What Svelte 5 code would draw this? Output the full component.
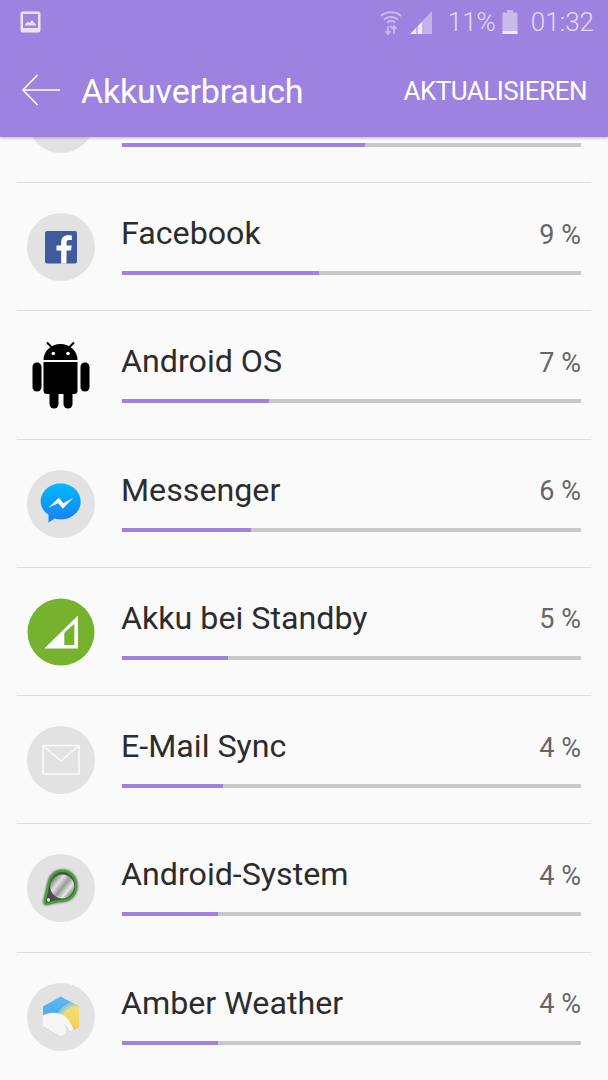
<script lang="ts">
  const apps = [
    { id: 'top', name: '', pct: '', bar: 53, icon: 'blank' },
    { id: 'fb', name: 'Facebook', pct: '9 %', bar: 43, icon: 'facebook' },
    { id: 'os', name: 'Android OS', pct: '7 %', bar: 32, icon: 'android' },
    { id: 'msg', name: 'Messenger', pct: '6 %', bar: 28, icon: 'messenger' },
    { id: 'idle', name: 'Akku bei Standby', pct: '5 %', bar: 23, icon: 'standby' },
    { id: 'mail', name: 'E-Mail Sync', pct: '4 %', bar: 22, icon: 'mail' },
    { id: 'sys', name: 'Android-System', pct: '4 %', bar: 21, icon: 'system' },
    { id: 'amber', name: 'Amber Weather', pct: '4 %', bar: 21, icon: 'amber' },
  ];
</script>

<div class="screen">
  <header class="appbar">
    <div class="status">
      <svg class="pic" width="21" height="22" viewBox="0 0 21 22">
        <rect x="0.5" y="0.5" width="20" height="21" rx="2" fill="#ebe4f9" />
        <rect x="3" y="3" width="15" height="14" fill="#9e82e0" />
        <path d="M4.5 14.5 L7.5 10.5 L9.5 12 L12 9 L16.5 14.5 Z" fill="#ebe4f9" />
      </svg>
      <span class="spacer"></span>
      <svg class="wifi" width="22" height="25" viewBox="0 0 22 25" fill="none" stroke="#c9baee" stroke-width="2">
        <path d="M1 6 C6 1 16 1 21 6" />
        <path d="M4 9.5 C8 6 14 6 18 9.5" />
        <path d="M7 12.5 C9.5 10.5 12.5 10.5 15 12.5" />
        <path d="M11 15 L9 17.5 L13 17.5 Z" fill="#c9baee" stroke="none" />
        <path d="M8 16 V24 M5.5 21 L8 24 L10.5 21 M14 24 V16 M11.5 19 L14 16 L16.5 19" stroke-width="1.8" />
      </svg>
      <svg class="signal" width="22" height="23" viewBox="0 0 22 23">
        <path d="M22 0 V23 H0 Z" fill="#c3b2ec" />
        <path d="M0 23 L6 17 V23 Z M8 15 L12 11 V23 H8 Z" fill="#f0ebfb" />
      </svg>
      <span class="pct">11%</span>
      <svg class="battery" width="16" height="24" viewBox="0 0 16 24">
        <rect x="5" y="0" width="6" height="3" fill="#c9baee" />
        <rect x="0.5" y="2.5" width="15" height="21.5" fill="#c9baee" />
        <rect x="0.5" y="21" width="15" height="3" fill="#f0ebfb" />
      </svg>
      <span class="clock">01:32</span>
    </div>
    <div class="toolbar">
      <svg class="back" width="40" height="32" viewBox="0 0 40 32" fill="none" stroke="#fff" stroke-width="1.6">
        <path d="M39 16 H2 M16.5 1 L2 16 L16.5 31" />
      </svg>
      <h1>Akkuverbrauch</h1>
      <span class="action">AKTUALISIEREN</span>
    </div>
  </header>

  <div class="list">
    {#each apps as app (app.id)}
      <div class="row">
        <div class="icon">
          {#if app.icon === 'android'}
            <svg width="68" height="68" viewBox="0 0 68 68">
              <path d="M16.5 19 C16.5 10 24 3 33.5 3 C43 3 50.5 10 50.5 19 Z" fill="#000" />
              <path d="M20 1.5 L25 6.5 M47 1.5 L42 6.5" stroke="#000" stroke-width="2" />
              <circle cx="26.3" cy="12.5" r="1.8" fill="#fff" />
              <circle cx="41" cy="12.5" r="1.8" fill="#fff" />
              <path d="M16.5 21 H50.5 V49.5 Q50.5 53 47 53 H20 Q16.5 53 16.5 49.5 Z" fill="#000" />
              <rect x="5.5" y="21.5" width="9" height="29" rx="4.5" fill="#000" />
              <rect x="53.5" y="21.5" width="9" height="29" rx="4.5" fill="#000" />
              <rect x="22.5" y="45" width="9" height="22.5" rx="4.5" fill="#000" />
              <rect x="36.5" y="45" width="9" height="22.5" rx="4.5" fill="#000" />
            </svg>
          {:else if app.icon === 'standby'}
            <svg width="68" height="68" viewBox="0 0 68 68">
              <circle cx="34" cy="34" r="33.5" fill="#76b22e" />
              <path d="M17.3 50.5 L51 17.5 V50.5 Z" fill="#fff" />
              <path d="M37.3 47 H47.3 V25.8 L37.3 34.8 Z" fill="#76b22e" />
            </svg>
          {:else}
            <svg width="68" height="68" viewBox="0 0 68 68">
              <circle cx="34" cy="34" r="34" fill="#e2e2e2" />
              {#if app.icon === 'facebook'}
                <rect x="18" y="18" width="32" height="32.5" rx="2" fill="#3e5b9e" />
                <path d="M39.5 50.5 V37.5 H44 L44.7 32.5 H39.5 V29.5 C39.5 27.8 40.3 27 42 27 H44.8 V22.5 C43.8 22.3 42.5 22.2 41 22.2 C37 22.2 34.2 24.6 34.2 29 V32.5 H29.5 V37.5 H34.2 V50.5 Z" fill="#fff" />
              {:else if app.icon === 'messenger'}
                <defs>
                  <linearGradient id="bubble" x1="0" y1="0" x2="0" y2="1">
                    <stop offset="0" stop-color="#00baff" />
                    <stop offset="0.5" stop-color="#0a9cf8" />
                    <stop offset="1" stop-color="#1c7ff0" />
                  </linearGradient>
                </defs>
                <path d="M33.7 13.5 C44.8 13.5 53.7 21.5 53.7 31.5 C53.7 41.5 44.8 49.5 33.7 49.5 C31.5 49.5 29.5 49.2 27.7 48.6 L21.5 52.5 V44.8 C16.7 41.5 13.7 36.8 13.7 31.5 C13.7 21.5 22.6 13.5 33.7 13.5 Z" fill="url(#bubble)" />
                <path d="M21.3 37.8 L32 27.8 L36.3 33.2 L46.3 27.8 L35.7 38.8 L31.3 33.2 Z" fill="#fff" />
              {:else if app.icon === 'mail'}
                <rect x="16" y="19.5" width="36" height="28.5" fill="none" stroke="#fafafa" stroke-width="1.5" />
                <path d="M16 19.5 L34 35 L52 19.5" fill="none" stroke="#fafafa" stroke-width="1.5" />
              {:else if app.icon === 'system'}
                <defs>
                  <linearGradient id="metal" x1="0" y1="0.1" x2="1" y2="0.9">
                    <stop offset="0" stop-color="#4a4a4a" />
                    <stop offset="0.32" stop-color="#e2e2e2" />
                    <stop offset="0.52" stop-color="#9a9a9a" />
                    <stop offset="0.72" stop-color="#e6e6e6" />
                    <stop offset="1" stop-color="#3f3f3f" />
                  </linearGradient>
                  <filter id="soft" x="-20%" y="-20%" width="140%" height="140%">
                    <feGaussianBlur stdDeviation="1.2" />
                  </filter>
                </defs>
                <path d="M35.5 17 C43.5 17 49 24 49 32 C49 40 43.5 45.5 36 46.5 C30 47 25 48 20 49.5 C18 50 17.5 48.5 18 46.5 C19.5 41 20.5 35 22 29 C23.5 22 28.5 17 35.5 17 Z" fill="none" stroke="#444" stroke-width="3" filter="url(#soft)" />
                <path d="M35.5 17 C43.5 17 49 24 49 32 C49 40 43.5 45.5 36 46.5 C30 47 25 48 20 49.5 C18 50 17.5 48.5 18 46.5 C19.5 41 20.5 35 22 29 C23.5 22 28.5 17 35.5 17 Z" fill="#4d4d4d" stroke="#2fb51c" stroke-width="1.8" />
                <circle cx="35.3" cy="32.5" r="12" fill="url(#metal)" />
                <circle cx="21.5" cy="46" r="2.2" fill="#eee" stroke="#333" stroke-width="0.8" />
              {:else if app.icon === 'amber'}
                <defs>
                  <clipPath id="hex">
                    <path d="M33.7 13.5 L52 23.5 V43.5 L33.7 54 L16 43.5 V23.5 Z" />
                  </clipPath>
                  <linearGradient id="sun" x1="0" y1="0" x2="0" y2="1">
                    <stop offset="0" stop-color="#efe07e" />
                    <stop offset="0.5" stop-color="#f8d35c" />
                    <stop offset="1" stop-color="#fdb52e" />
                  </linearGradient>
                  <linearGradient id="sky" x1="0" y1="0" x2="0" y2="1">
                    <stop offset="0" stop-color="#62b8ee" />
                    <stop offset="1" stop-color="#2f9df0" />
                  </linearGradient>
                </defs>
                <g clip-path="url(#hex)">
                  <rect x="14" y="12" width="40" height="43" fill="url(#sky)" />
                  <circle cx="51" cy="41" r="23" fill="#8cc8d8" />
                  <circle cx="51" cy="41" r="20.5" fill="#b4d6b0" />
                  <circle cx="51" cy="41" r="18" fill="url(#sun)" />
                  <path d="M15 33 C19 30 26 29 32 30.5 C38 32 42 37 44 41 C45.5 44 47 47 48 49.500 L36 56 H14 Z" fill="#f6f6f6" />
                  <path d="M37 41 C41 44 43 47 43.5 52 L38 55 C40 50 39.5 45 37 41 Z" fill="#dedede" />
                </g>
              {/if}
            </svg>
          {/if}
        </div>
        <div class="info">
          <div class="line">
            <span class="name">{app.name}</span>
            <span class="val">{app.pct}</span>
          </div>
          <div class="track">
            <div class="fill" style={`width:${app.bar}%`}></div>
          </div>
        </div>
      </div>
    {/each}
  </div>
</div>

<style>
  :global(body) {
    margin: 0;
    background: #fafafa;
  }

  .screen {
    width: 608px;
    height: 1080px;
    overflow: hidden;
    background: #fafafa;
    font-family: Roboto, sans-serif;
  }

  .appbar {
    position: relative;
    z-index: 2;
    height: 137px;
    background: #9e82e0;
    box-shadow: 0 1px 3px rgba(0, 0, 0, 0.25);
  }

  .status {
    display: flex;
    align-items: center;
    height: 44px;
    padding: 0 14px 0 20px;
    color: #e2daf6;
    font-size: 26px;
  }

  .spacer {
    flex: 1;
  }

  .signal {
    margin-left: 8px;
  }

  .pct {
    margin-left: 16px;
    font-weight: 300;
  }

  .battery {
    margin-left: 6px;
  }

  .clock {
    margin-left: 13px;
    font-weight: 300;
  }

  .toolbar {
    display: flex;
    align-items: center;
    height: 93px;
    padding: 0 21px;
    color: #fff;
  }

  .back {
    margin-top: -2px;
  }

  h1 {
    margin: 0 0 0 20px;
    flex: 1;
    font-size: 34px;
    font-weight: 400;
    letter-spacing: -0.2px;
  }

  .action {
    font-size: 26px;
    letter-spacing: -0.5px;
  }

  .list {
    margin-top: -82.3px;
  }

  .row {
    display: flex;
    align-items: flex-start;
    box-sizing: border-box;
    height: 128.3px;
    margin: 0 17px;
    padding: 30px 10px 0;
    border-bottom: 1px solid #dcdcdc;
  }

  .row:last-child {
    border-bottom: 0;
  }

  .icon {
    flex: none;
    width: 68px;
    height: 68px;
    margin-right: 27px;
  }

  .icon svg {
    display: block;
  }

  .info {
    flex: 1;
    margin-top: -2px;
  }

  .line {
    display: flex;
    align-items: center;
    justify-content: space-between;
    height: 44px;
  }

  .name {
    margin-left: -1px;
    font-size: 32.2px;
    color: #2c2c2c;
  }

  .val {
    margin-top: 3px;
    font-size: 27px;
    color: #666;
  }

  .track {
    height: 4px;
    margin-top: 16px;
    background: #c8c8c8;
  }

  .fill {
    height: 100%;
    background: #9e82e0;
  }
</style>
